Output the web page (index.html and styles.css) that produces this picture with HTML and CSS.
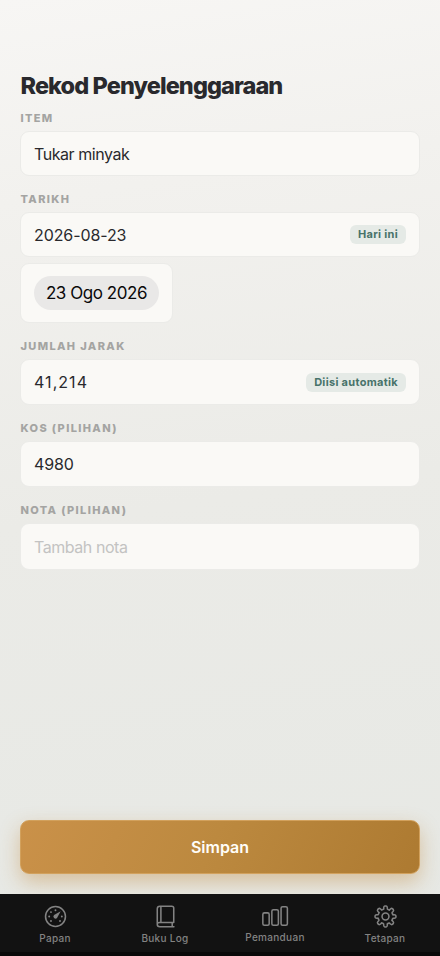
FILE: index.html
```html
<!DOCTYPE html>
<html lang="ms">
<head>
<meta charset="utf-8">
<meta name="viewport" content="width=device-width, initial-scale=1">
<title>Rekod Penyelenggaraan</title>
<link rel="stylesheet" href="styles.css">
</head>
<body>
<div class="screen">
  <main class="form">
    <h1 class="title">Rekod Penyelenggaraan</h1>

    <div class="label">ITEM</div>
    <div class="field"><span class="value">Tukar minyak</span></div>

    <div class="label">TARIKH</div>
    <div class="field"><span class="value date-value">2026-08-23</span><span class="badge">Hari ini</span></div>
    <div class="picker"><span class="picker-pill">23 Ogo 2026</span></div>

    <div class="label">JUMLAH JARAK</div>
    <div class="field field-tall"><span class="value distance">41,214</span><span class="badge">Diisi automatik</span></div>

    <div class="label">KOS (PILIHAN)</div>
    <div class="field field-tall"><span class="value cost">4980</span></div>

    <div class="label">NOTA (PILIHAN)</div>
    <div class="field field-note"><span class="value placeholder">Tambah nota</span></div>

    <div class="save">Simpan</div>
  </main>

  <nav class="tabs">
    <div class="tab">
      <svg class="icon" viewBox="-12 -12 24 24">
        <circle r="10.4"/>
        <path class="solid" d="M5.4-5.4 1.6 1.5A2.1 2.1 0 1 1-1.5-1.6Z"/>
        <g class="solid"><circle cx="-6.6" cy="0" r="1"/><circle cx="-4.7" cy="-4.6" r="1"/><circle cx="0" cy="-6.6" r="1"/><circle cx="6.6" cy="0" r="1"/><circle cx="4.7" cy="4.7" r="1"/><circle cx="-4.7" cy="4.7" r="1"/></g>
      </svg>
      <span class="tab-label">Papan</span>
    </div>
    <div class="tab">
      <svg class="icon" viewBox="0 0 24 24">
        <path d="M20.6 18.2V3.2Q20.6 1.2 18.6 1.2H6.2Q3.4 1.2 3.4 4V20.2Q3.4 22.8 6 22.8H20.8M20.6 18.2H5.6Q3.4 18.2 3.4 20.2M7.2 1.2V18.2M19 18.2V22.8"/>
      </svg>
      <span class="tab-label">Buku Log</span>
    </div>
    <div class="tab tab-raised">
      <svg class="icon icon-wide" viewBox="0 0 30 24">
        <rect x="1.8" y="8.2" width="6.6" height="13" rx="1.6"/><rect x="11.2" y="5" width="6.8" height="16.2" rx="1.6"/><rect x="20.8" y="1.8" width="6.6" height="19.4" rx="1.6"/>
      </svg>
      <span class="tab-label">Pemanduan</span>
    </div>
    <div class="tab">
      <svg class="icon" viewBox="-12 -12 24 24">
        <defs><path id="tooth" d="M-1.94-7.76-1.9-9.2Q-1.8-10.7-.7-10.9H.7Q1.8-10.7 1.9-9.2L1.94-7.76Q2.8-6.75 4.11-6.86"/></defs>
        <use href="#tooth"/><use href="#tooth" transform="rotate(45)"/><use href="#tooth" transform="rotate(90)"/><use href="#tooth" transform="rotate(135)"/><use href="#tooth" transform="rotate(180)"/><use href="#tooth" transform="rotate(225)"/><use href="#tooth" transform="rotate(270)"/><use href="#tooth" transform="rotate(315)"/>
        <circle r="3.6"/>
      </svg>
      <span class="tab-label">Tetapan</span>
    </div>
  </nav>
</div>
</body>
</html>
```
FILE: styles.css
```css
* { box-sizing: border-box; }
body {
  margin: 0;
  font-family: Inter, "Liberation Sans", sans-serif;
  color: #29292d;
}
.screen {
  width: 440px;
  height: 956px;
  display: flex;
  flex-direction: column;
  overflow: hidden;
  background: linear-gradient(172deg, #f7f6f4 0%, #f2f1ee 20%, #ebebe7 52%, #e6e8e4 100%);
}
.form {
  flex: 1;
  display: flex;
  flex-direction: column;
  padding: 70px 20px 20px;
}
.title {
  margin: 0;
  height: 31px;
  padding-left: 0.5px;
  line-height: 31px;
  font-size: 23.5px;
  font-weight: 800;
  letter-spacing: -0.91px;
}
.label {
  height: 14px;
  margin: 16px 0 6px;
  padding-left: 0.5px;
  line-height: 14px;
  font-size: 11px;
  font-weight: 800;
  letter-spacing: 1.36px;
  color: #a4a4a2;
}
.title + .label { margin-top: 10px; }
.field {
  height: 45px;
  display: flex;
  align-items: center;
  justify-content: space-between;
  padding: 0 13px;
  border: 1px solid #ebebe8;
  border-radius: 9px;
  background: #faf9f6;
}
.field-tall { height: 46px; }
.field-note { height: 47px; }
.value { font-size: 16px; line-height: 22px; letter-spacing: -0.45px; }
.date-value { letter-spacing: -0.1px; }
.distance { letter-spacing: 1.05px; }
.cost { letter-spacing: -0.1px; }
.placeholder { color: #c3c3c2; }
.badge {
  height: 19px;
  padding: 0 8px;
  border-radius: 6px;
  background: #e5eae6;
  color: #48736a;
  font-size: 11px;
  font-weight: 700;
  line-height: 19px;
  letter-spacing: 0.3px;
}
.picker {
  align-self: flex-start;
  width: 153px;
  height: 60px;
  margin-top: 6px;
  padding: 12px 13px;
  border: 1px solid #ebebe8;
  border-radius: 9px;
  background: #faf9f6;
}
.picker-pill {
  display: block;
  height: 34px;
  border-radius: 17px;
  background: #e9e8e7;
  color: #09090a;
  font-size: 17px;
  line-height: 34px;
  letter-spacing: -0.45px;
  text-align: center;
}
.save {
  height: 54px;
  margin-top: auto;
  border: 1px solid #d2a15d;
  border-radius: 9px;
  background: linear-gradient(115deg, #ca9149 0%, #bc893f 48%, #ad7a31 100%);
  box-shadow: 0 8px 20px rgba(190, 134, 56, 0.42);
  color: #fffdf8;
  font-size: 16px;
  font-weight: 600;
  line-height: 52px;
  text-align: center;
}
.tabs {
  position: relative;
  height: 62px;
  display: grid;
  grid-template-columns: repeat(4, 1fr);
  background: #121212;
  border-bottom: 4px solid #090909;
}
.tab {
  display: flex;
  flex-direction: column;
  align-items: center;
  padding-top: 11px;
  color: #838383;
}
.tab-label {
  margin-top: 4px;
  font-size: 10px;
  font-weight: 500;
  line-height: 13px;
  letter-spacing: 0.3px;
}
.tab-raised .tab-label { margin-top: 3px; }
.icon {
  width: 23px;
  height: 23px;
  fill: none;
  stroke: currentColor;
  stroke-width: 1.6;
  stroke-linecap: round;
  stroke-linejoin: round;
}
.icon-wide { width: 29px; }
.solid { fill: currentColor; stroke: none; }
```
